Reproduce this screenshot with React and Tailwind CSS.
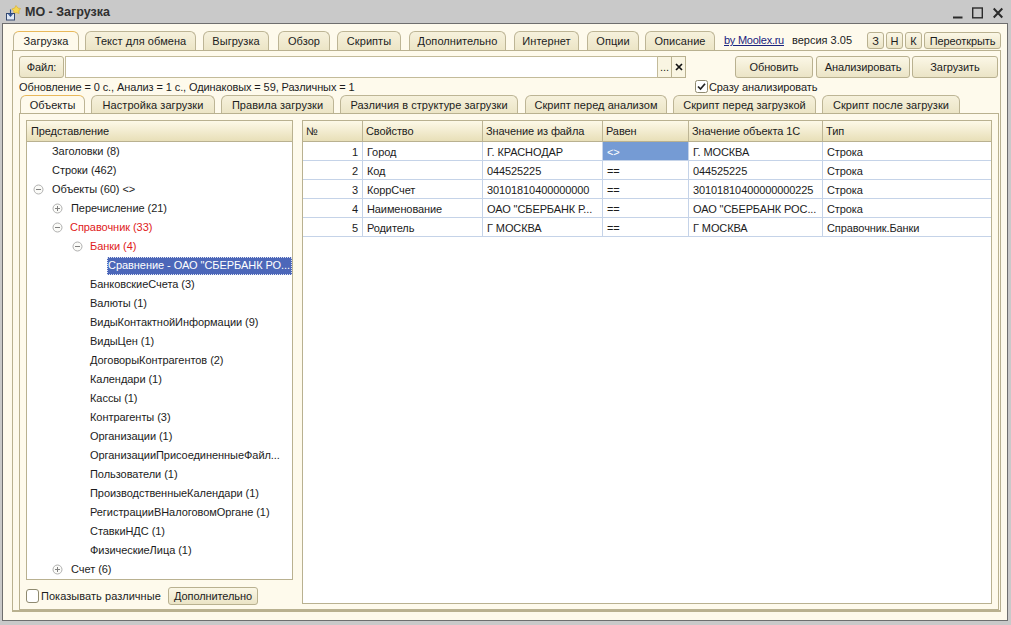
function Tab({ w, active, children, ml = "" }) {
  return (
    <div
      className={`${w} ${ml} h-full flex items-center justify-center pt-px tracking-[0.05px] rounded-t-[6px] border border-[#bdb595] whitespace-nowrap ${
        active
          ? "bg-[#fefaec] border-t-[#e8b85a] border-b-0 relative z-10 -mb-px h-[20px]"
          : "bg-gradient-to-b from-[#f6f1dc] to-[#ece5c6] border-b-0"
      }`}
    >
      {children}
    </div>
  );
}

function Btn({ className, children }) {
  return (
    <div
      className={`${className} flex items-center justify-center pt-px rounded-[3px] border border-[#b9b190] bg-gradient-to-b from-[#fbf7e6] to-[#ebe4c6] whitespace-nowrap`}
    >
      {children}
    </div>
  );
}

function Expander({ plus }) {
  return (
    <svg width="11" height="11" viewBox="0 0 11 11" className="shrink-0">
      <circle cx="5.5" cy="5.5" r="4.5" fill="#fbfbf8" stroke="#b0b0b0" />
      <path d="M3 5.5H8" stroke="#808080" />
      {plus && <path d="M5.5 3V8" stroke="#808080" />}
    </svg>
  );
}

const leaves = [
  "БанковскиеСчета (3)",
  "Валюты (1)",
  "ВидыКонтактнойИнформации (9)",
  "ВидыЦен (1)",
  "ДоговорыКонтрагентов (2)",
  "Календари (1)",
  "Кассы (1)",
  "Контрагенты (3)",
  "Организации (1)",
  "ОрганизацииПрисоединенныеФайл...",
  "Пользователи (1)",
  "ПроизводственныеКалендари (1)",
  "РегистрацииВНалоговомОргане (1)",
  "СтавкиНДС (1)",
  "ФизическиеЛица (1)",
];

const cols = [
  ["w-[60px]", "№"],
  ["w-[120px]", "Свойство"],
  ["w-[120px]", "Значение из файла"],
  ["w-[86px]", "Равен"],
  ["w-[134px]", "Значение объекта 1С"],
  ["flex-1", "Тип"],
];

const rows = [
  ["1", "Город", "Г. КРАСНОДАР", "<>", "Г. МОСКВА", "Строка"],
  ["2", "Код", "044525225", "==", "044525225", "Строка"],
  ["3", "КоррСчет", "30101810400000000", "==", "30101810400000000225", "Строка"],
  ["4", "Наименование", 'ОАО "СБЕРБАНК Р...', "==", 'ОАО "СБЕРБАНК РОС...', "Строка"],
  ["5", "Родитель", "Г МОСКВА", "==", "Г МОСКВА", "Справочник.Банки"],
];

export default function App() {
  return (
    <div className="w-[1011px] h-[625px] bg-[#c9c9c9] overflow-hidden flex flex-col text-[11px] tracking-[-0.1px] leading-none text-[#1c1c1c] font-['Liberation_Sans',Arial,sans-serif]">
      {/* title bar */}
      <div className="h-[23px] flex items-center pt-[2px] pl-[5px] pr-[8px] shrink-0">
        <svg width="17" height="18" viewBox="0 0 17 18" className="shrink-0">
          <path d="M11 1.5l2 2.6 2.5.4-1.6 2.4.2 2.6-2.9-.9-2.2 1-.3-2.7L6.8 5l2.8-.9z" fill="#f4d652" stroke="#d6a92c" strokeWidth=".6" />
          <rect x="1.5" y="9.5" width="8" height="6.5" fill="#dfe8f5" stroke="#34496f" />
          <path d="M5.5 5.5v6M3.2 9.5l2.3 2.6 2.3-2.6" fill="none" stroke="#274a8e" strokeWidth="1.1" />
        </svg>
        <span className="ml-[3px] text-[12.5px] tracking-normal font-bold text-[#303030]">МО - Загрузка</span>
        <div className="ml-auto flex items-center">
          <svg width="10" height="12" viewBox="0 0 10 12"><path d="M0 10.5H9.5" stroke="#2b2b2b" strokeWidth="2" /></svg>
          <svg width="11" height="12" viewBox="0 0 11 12" className="ml-[9px]"><rect x=".7" y="1" width="9.6" height="9.8" fill="none" stroke="#2b2b2b" strokeWidth="1.4" /></svg>
          <svg width="10" height="12" viewBox="0 0 10 12" className="ml-[10px]"><path d="M.7 1.5L9.3 10.5M9.3 1.5L.7 10.5" stroke="#2b2b2b" strokeWidth="2" /></svg>
        </div>
      </div>

      {/* window body */}
      <div className="ml-[2px] w-[1006px] h-[598px] shrink-0 border border-[#6e6e6e] bg-[#fefaec] flex flex-col">
        {/* top tabs */}
        <div className="flex h-[19px] mt-[7px] ml-[10px] shrink-0">
          <Tab w="w-[66px]" active>Загрузка</Tab>
          <Tab w="w-[111px]" ml="ml-[6px]">Текст для обмена</Tab>
          <Tab w="w-[66px]" ml="ml-[7px]">Выгрузка</Tab>
          <Tab w="w-[52px]" ml="ml-[9px]">Обзор</Tab>
          <Tab w="w-[64px]" ml="ml-[7px]">Скрипты</Tab>
          <Tab w="w-[97px]" ml="ml-[8px]">Дополнительно</Tab>
          <Tab w="w-[65px]" ml="ml-[8px]">Интернет</Tab>
          <Tab w="w-[52px]" ml="ml-[8px]">Опции</Tab>
          <Tab w="w-[70px]" ml="ml-[6px]">Описание</Tab>
          <a className="ml-[9px] w-[61px] self-center underline tracking-[-0.25px] text-[#1a237e] whitespace-nowrap">by Moolex.ru</a>
          <span className="ml-[7px] w-[61px] self-center tracking-normal whitespace-nowrap">версия 3.05</span>
          <Btn className="ml-[14px] w-[17px] h-[17px] mt-px">З</Btn>
          <Btn className="ml-[2px] w-[17px] h-[17px] mt-px">Н</Btn>
          <Btn className="ml-[2px] w-[17px] h-[17px] mt-px">К</Btn>
          <Btn className="ml-[2px] w-[77px] h-[17px] mt-px">Переоткрыть</Btn>
        </div>

        {/* outer panel */}
        <div className="ml-[9px] w-[989px] h-[562px] shrink-0 border border-[#b9b190] border-b-2 flex flex-col pl-[6px]">
          {/* file row */}
          <div className="flex h-[22px] mt-[5px] shrink-0">
            <Btn className="w-[45px] h-[22px]">Файл:</Btn>
            <div className="ml-px w-[593px] h-[22px] bg-white border border-[#c3bb9a]" />
            <div className="w-[14px] h-[22px] bg-[#f9f5e2] border border-[#b9b190] border-l-0 flex items-center justify-center">...</div>
            <div className="w-[14px] h-[22px] bg-[#f9f5e2] border border-[#b9b190] border-l-0 flex items-center justify-center">
              <svg width="8" height="8" viewBox="0 0 8 8"><path d="M1 1l6 6M7 1L1 7" stroke="#111" strokeWidth="1.7" /></svg>
            </div>
            <Btn className="ml-[49px] w-[78px] h-[22px]">Обновить</Btn>
            <Btn className="ml-[3px] w-[94px] h-[22px]">Анализировать</Btn>
            <Btn className="ml-[2px] w-[86px] h-[22px]">Загрузить</Btn>
          </div>
          {/* status row */}
          <div className="flex items-center h-[17px] pt-px shrink-0 whitespace-nowrap">
            <span className="w-[676px]">Обновление = 0 с., Анализ = 1 с., Одинаковых = 59, Различных = 1</span>
            <svg width="13" height="13" viewBox="0 0 13 13" className="shrink-0 -mt-px">
              <rect x=".5" y=".5" width="12" height="12" rx="2" fill="#fff" stroke="#8f8a70" />
              <path d="M3 6.5l2.5 2.5L10 3.8" fill="none" stroke="#222" strokeWidth="1.7" />
            </svg>
            <span className="ml-px">Сразу анализировать</span>
          </div>

          {/* inner tabs */}
          <div className="flex h-[18px] ml-px shrink-0">
            <Tab w="w-[65px]" active>Объекты</Tab>
            <Tab w="w-[124px]" ml="ml-[6px]">Настройка загрузки</Tab>
            <Tab w="w-[113px]" ml="ml-[6px]">Правила загрузки</Tab>
            <Tab w="w-[178px]" ml="ml-[6px]">Различия в структуре загрузки</Tab>
            <Tab w="w-[142px]" ml="ml-[7px]">Скрипт перед анализом</Tab>
            <Tab w="w-[143px]" ml="ml-[6px]">Скрипт перед загрузкой</Tab>
            <Tab w="w-[138px]" ml="ml-[6px]">Скрипт после загрузки</Tab>
          </div>

          {/* inner panel */}
          <div className="w-[980px] h-[497px] shrink-0 border border-[#b9b190] flex pl-[6px] pt-[6px] gap-[9px]">
            {/* left column */}
            <div className="w-[267px] flex flex-col shrink-0">
              <div className="h-[460px] border border-[#b9b190] bg-white flex flex-col overflow-hidden">
                <div className="h-[21px] shrink-0 flex items-center pl-[4px] pt-px border-b border-[#b9b190] bg-gradient-to-b from-[#fdf9e8] to-[#e8dfb8]">Представление</div>
                <div className="flex flex-col tracking-[-0.05px]">
                  <div className="h-[19px] flex items-center pl-[25px]">Заголовки (8)</div>
                  <div className="h-[19px] flex items-center pl-[25px]">Строки (462)</div>
                  <div className="h-[19px] flex items-center pl-[6px] gap-[8px]"><Expander />Объекты (60) &lt;&gt;</div>
                  <div className="h-[19px] flex items-center pl-[25px] gap-[8px]"><Expander plus />Перечисление (21)</div>
                  <div className="h-[19px] flex items-center pl-[25px] gap-[7px] text-[#e01b1b]"><Expander />Справочник (33)</div>
                  <div className="h-[19px] flex items-center pl-[45px] gap-[7px] text-[#e01b1b]"><Expander />Банки (4)</div>
                  <div className="h-[19px] flex items-center pl-[80px]">
                    <div className="flex-1 h-[18px] flex items-center bg-[#4c67b9] text-white border border-dotted border-[#dfe4f5] whitespace-nowrap overflow-hidden">Сравнение - ОАО "СБЕРБАНК РО...</div>
                  </div>
                  {leaves.map((l) => (
                    <div key={l} className="h-[19px] flex items-center pl-[63px] whitespace-nowrap">{l}</div>
                  ))}
                  <div className="h-[19px] flex items-center pl-[25px] gap-[8px]"><Expander plus />Счет (6)</div>
                </div>
              </div>
              <div className="flex items-center mt-[7px] h-[18px]">
                <svg width="13" height="14" viewBox="0 0 13 14" className="shrink-0">
                  <rect x=".5" y=".5" width="12" height="13" rx="2.5" fill="#fff" stroke="#8f8a70" />
                </svg>
                <span className="ml-[2px] pt-px whitespace-nowrap tracking-[0.05px] w-[127px]">Показывать различные</span>
                <Btn className="w-[90px] h-[18px]">Дополнительно</Btn>
              </div>
            </div>

            {/* grid */}
            <div className="w-[690px] h-[484px] shrink-0 border border-[#b9b190] bg-white flex flex-col overflow-hidden">
              <div className="h-[21px] shrink-0 flex border-b border-[#b9b190] bg-gradient-to-b from-[#fdf9e8] to-[#e8dfb8]">
                {cols.map(([w, t]) => (
                  <div key={t} className={`${w} shrink-0 flex items-center pl-[3px] pt-px border-r border-[#bdb595] last:border-r-0`}>{t}</div>
                ))}
              </div>
              {rows.map((r, i) => (
                <div key={i} className="h-[19px] shrink-0 flex border-b border-[#c5d3e8]">
                  {r.map((c, j) => (
                    <div
                      key={j}
                      className={`${cols[j][0]} shrink-0 flex items-center pt-[2px] border-r border-[#c5d3e8] last:border-r-0 whitespace-nowrap ${j === 0 ? "justify-end pr-[4px]" : "pl-[4px]"} ${i === 0 && j === 3 ? "bg-[#759bd4] text-white" : ""}`}
                    >
                      {c}
                    </div>
                  ))}
                </div>
              ))}
            </div>
          </div>
        </div>
      </div>
    </div>
  );
}
